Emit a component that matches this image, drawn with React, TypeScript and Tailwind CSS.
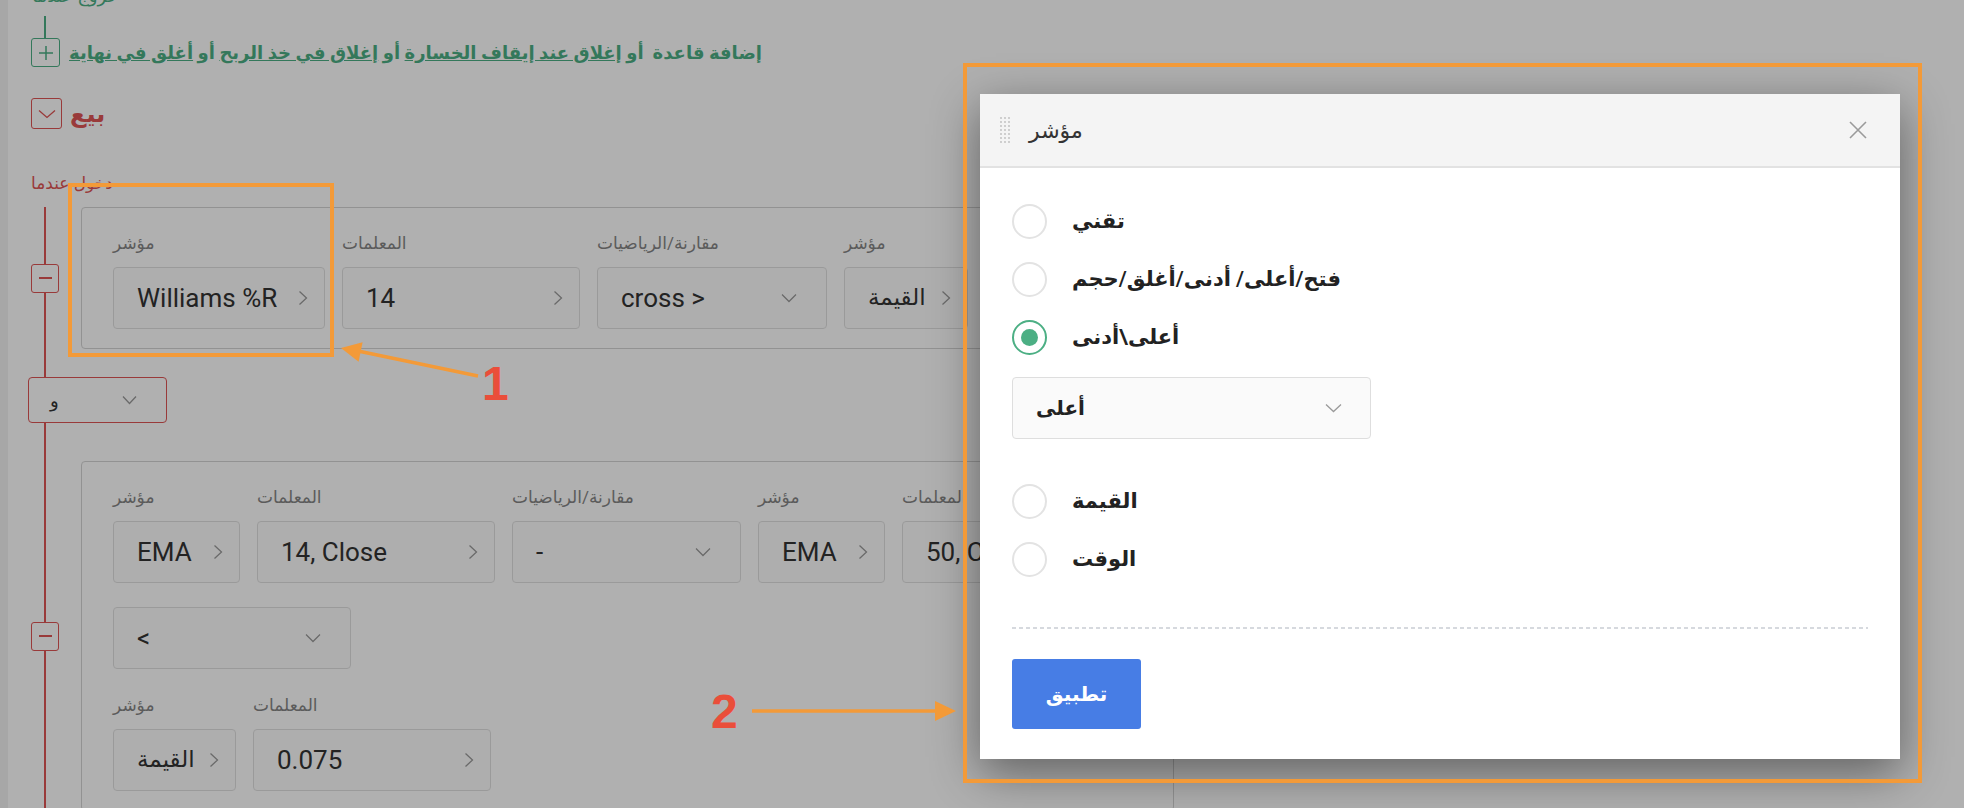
import React from 'react';

function ChevronRight() {
  return (
    <svg width="10" height="16" viewBox="0 0 10 16" fill="none" stroke="#9a9a9a" strokeWidth="1.3">
      <path d="M1.5 1.5 L8.5 8 L1.5 14.5" />
    </svg>
  );
}

function ChevronDown({ color = '#9a9a9a', w = 16 }: { color?: string; w?: number }) {
  return (
    <svg width={w} height="10" viewBox={`0 0 ${w} 10`} fill="none" stroke={color} strokeWidth="1.3">
      <path d={`M1 1.5 L${w / 2} 8.5 L${w - 1} 1.5`} />
    </svg>
  );
}

interface FieldProps {
  label?: string;
  value: string;
  width: string;
  select?: boolean;
  arabic?: boolean;
}

const Field = ({ label, value, width, select, arabic }: FieldProps) => {
  return (
    <div className={`flex flex-col shrink-0 ${width}`}>
      {label && (
        <div className="h-[28px] mb-[10px] text-[17px] leading-[28px] text-[#858585] whitespace-nowrap">
          {label}
        </div>
      )}
      <div
        className={`h-[62px] rounded-[4px] border-[1.5px] border-[#e0e0e0] bg-[#fdfdfd] flex items-center justify-between pl-[23px] text-[#333] ${
          select ? 'pr-[29px]' : 'pr-[16px]'
        } ${arabic ? 'text-[23px]' : 'text-[26px]'}`}
      >
        <span className="whitespace-nowrap">{value}</span>
        {select ? <ChevronDown /> : <ChevronRight />}
      </div>
    </div>
  );
};

const MinusBox = () => (
  <div className="relative shrink-0 w-[28px] h-[29px] rounded-[3px] border-[1.5px] border-[#de5454] bg-white flex items-center justify-center">
    <div className="w-[13px] h-[1.5px] bg-[#de5454]" />
  </div>
);

const Radio = ({ label, checked }: { label: string; checked?: boolean }) => (
  <div className="flex items-center h-[35px] gap-[25px]">
    <div
      className={`w-[35px] h-[35px] rounded-full border-2 flex items-center justify-center ${
        checked ? 'border-[#4caf84]' : 'border-[#e3e3e3]'
      }`}
    >
      {checked && <div className="w-[17px] h-[17px] rounded-full bg-[#4caf84]" />}
    </div>
    <span className="text-[21px] font-semibold text-[#222]">{label}</span>
  </div>
);

export default function App() {
  return (
    <div className="relative w-[1964px] h-[808px] overflow-hidden bg-white font-['Roboto','DejaVu_Sans',sans-serif]">
      <div className="flex h-full">
        <div className="w-[8px] shrink-0 bg-[#f2f2f2]" />
        <div className="flex-1 pl-[23px]">
          {/* خروج */}
          <div className="-mt-[14px] h-[20px] ml-[1px] text-[18px] leading-[20px] text-[#4caf84]">خروج عندما</div>
          <div className="ml-[13px] mt-[10px] h-[22px] w-[1.5px] bg-[#4caf84]" />
          <div className="flex items-center h-[29px]">
            <div className="w-[29px] h-[29px] shrink-0 rounded-[3px] border-[1.5px] border-[#4caf84] flex items-center justify-center">
              <svg width="14" height="14" viewBox="0 0 14 14" stroke="#4caf84" strokeWidth="1.5">
                <path d="M7 0 V14 M0 7 H14" />
              </svg>
            </div>
            <div dir="rtl" className="ml-[9px] text-[18px] font-semibold text-[#4caf84] whitespace-nowrap">
              إضافة قاعدة&nbsp; أو <span className="underline">إغلاق عند إيقاف الخسارة</span> أو{' '}
              <span className="underline">إغلاق في خذ الربح</span> أو <span className="underline">أغلق في نهاية</span>
            </div>
          </div>

          {/* بيع */}
          <div className="mt-[31px] flex items-center h-[31px]">
            <div className="w-[31px] h-[31px] rounded-[3px] border-[1.5px] border-[#de5454] flex items-center justify-center">
              <ChevronDown color="#de5454" w={18} />
            </div>
            <span className="ml-[8px] text-[24px] font-semibold text-[#de5454]">بيع</span>
          </div>
          <div className="mt-[41px] h-[26px] text-[17px] leading-[26px] text-[#de5454]">دخول عندما</div>

          {/* شجرة الشروط */}
          <div className="relative mt-[11px]">
            <div className="absolute left-[13px] top-0 -bottom-[40px] w-[1.5px] bg-[#de5454]" />

            <div className="flex items-center">
              <MinusBox />
              <div className="ml-[22px] w-[1093px] shrink-0 rounded-[4px] border border-[#d4d4d4] bg-white pt-[21px] pb-[19px] pl-[31px] flex gap-[17px]">
                <Field label="مؤشر" value="Williams %R" width="w-[212px]" />
                <Field label="المعلمات" value="14" width="w-[238px]" />
                <Field label="مقارنة/الرياضيات" value="cross >" width="w-[230px]" select />
                <Field label="مؤشر" value="القيمة" width="w-[124px]" arabic />
                <Field label="المعلمات" value="-100" width="w-[160px]" />
              </div>
            </div>

            <div className="relative mt-[28px] -ml-[3px] w-[139px] h-[46px] rounded-[4px] border-[1.5px] border-[#de5454] bg-white flex items-center justify-between pl-[21px] pr-[29px]">
              <span className="text-[18px] text-[#333]">و</span>
              <ChevronDown w={15} />
            </div>

            <div className="mt-[38px] flex items-center">
              <MinusBox />
              <div className="ml-[22px] w-[1093px] shrink-0 rounded-[4px] border border-[#d4d4d4] bg-white pt-[21px] pb-[19px] pl-[31px]">
                <div className="flex gap-[17px]">
                  <Field label="مؤشر" value="EMA" width="w-[127px]" />
                  <Field label="المعلمات" value="14, Close" width="w-[238px]" />
                  <Field label="مقارنة/الرياضيات" value="-" width="w-[229px]" select />
                  <Field label="مؤشر" value="EMA" width="w-[127px]" />
                  <Field label="المعلمات" value="50, Close" width="w-[238px]" />
                </div>
                <div className="mt-[24px] flex">
                  <Field value="<" width="w-[238px]" select />
                </div>
                <div className="mt-[22px] flex gap-[17px]">
                  <Field label="مؤشر" value="القيمة" width="w-[123px]" arabic />
                  <Field label="المعلمات" value="0.075" width="w-[238px]" />
                </div>
              </div>
            </div>
          </div>
        </div>
      </div>

      {/* خلفية النافذة */}
      <div className="absolute inset-0 bg-black/[0.31]" />

      {/* نافذة المؤشر */}
      <div className="absolute left-[980px] top-[94px] w-[920px] bg-white shadow-[0_14px_45px_rgba(0,0,0,0.45)]">
        <div className="h-[74px] bg-[#f4f4f4] border-b-2 border-[#e2e2e2] flex items-center justify-between pl-[20px] pr-[33px]">
          <div className="flex items-center gap-[19px]">
            <svg width="10" height="26" viewBox="0 0 10 26" fill="#bdbdbd">
              {[1, 5, 9].map((x) =>
                [1, 5, 9, 13, 17, 21, 25].map((y) => <circle key={`${x}-${y}`} cx={x} cy={y} r="0.9" />)
              )}
            </svg>
            <span className="text-[22px] text-[#333]">مؤشر</span>
          </div>
          <svg width="18" height="18" viewBox="0 0 18 18" stroke="#9a9a9a" strokeWidth="1.6">
            <path d="M1 1 L17 17 M17 1 L1 17" />
          </svg>
        </div>

        <div className="px-[32px] pt-[36px] pb-[30px] flex flex-col">
          <Radio label="تقني" />
          <div className="mt-[23px]">
            <Radio label="فتح/أعلى/ أدنى/أغلق/حجم" />
          </div>
          <div className="mt-[23px]">
            <Radio label="أعلى\أدنى" checked />
          </div>
          <div className="mt-[22px] w-[359px] h-[62px] rounded-[4px] border-[1.5px] border-[#dedede] bg-[#fafafa] flex items-center justify-between pl-[23px] pr-[28px]">
            <span className="text-[20px] font-semibold text-[#222]">أعلى</span>
            <ChevronDown w={17} />
          </div>
          <div className="mt-[45px]">
            <Radio label="القيمة" />
          </div>
          <div className="mt-[23px]">
            <Radio label="الوقت" />
          </div>
          <div className="mt-[50px] h-[2px] bg-[repeating-linear-gradient(90deg,#d6d9de_0_4px,transparent_4px_7px)]" />
          <button className="mt-[30px] w-[129px] h-[70px] rounded-[3px] bg-[#477de5] text-white text-[20px] font-semibold">
            تطبيق
          </button>
        </div>
      </div>

      {/* علامات الشرح */}
      <svg className="absolute inset-0 pointer-events-none" width="1964" height="808">
        <rect x="70" y="185" width="262" height="170" fill="none" stroke="#f39a38" strokeWidth="4" />
        <rect x="965" y="65" width="955" height="716" fill="none" stroke="#f39a38" strokeWidth="4" />
        <line x1="478" y1="376" x2="358" y2="351" stroke="#f39a38" strokeWidth="3.5" />
        <polygon points="341,348 362.6,342.2 358.6,361.8" fill="#f39a38" />
        <text x="482" y="400" fontFamily="'Liberation Sans', sans-serif" fontWeight="bold" fontSize="48" fill="#ea4e3a">
          1
        </text>
        <line x1="752" y1="711" x2="938" y2="711" stroke="#f39a38" strokeWidth="3.5" />
        <polygon points="956,711 935,701 935,721" fill="#f39a38" />
        <text x="711" y="728" fontFamily="'Liberation Sans', sans-serif" fontWeight="bold" fontSize="48" fill="#ea4e3a">
          2
        </text>
      </svg>
    </div>
  );
}
